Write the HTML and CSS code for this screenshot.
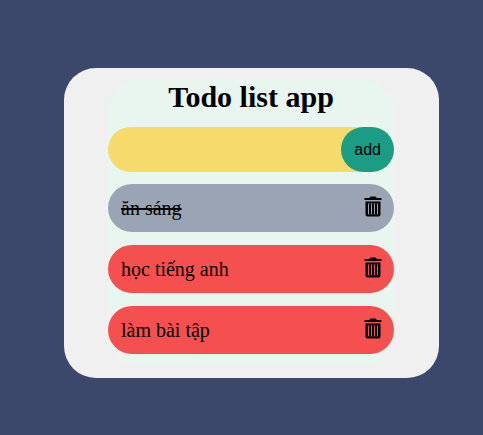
FILE: index.html
```html
<!DOCTYPE html>
<html lang="vi">
<head>
<meta charset="utf-8">
<title>Todo list app</title>
<link rel="stylesheet" href="styles.css">
</head>
<body>
<svg class="defs" aria-hidden="true">
  <symbol id="trash" viewBox="0 0 18 21">
    <path d="M5.500 2V1.500Q6 .5 7 .5h4q1 0 1.500 1V2H17.500V4H.5V2z"/>
    <path fill-rule="evenodd" d="M1.500 5.500h15V18.500q0 2-2 2H3.500q-2 0-2-2zM4 7.500V18.300h10V7.500z"/>
    <path d="M5 7.500h2v10.800H5zM8 7.500h2v10.800H8zM11 7.500h2v10.800h-2z"/>
  </symbol>
</svg>
<main class="card">
  <div class="app">
    <h1 class="title">Todo list app</h1>
    <form class="entry">
      <input class="entry-text" type="text" aria-label="New todo">
      <button class="entry-add" type="button">add</button>
    </form>
    <ul class="todos">
      <li class="todo done"><span>ăn sáng</span><button class="delete" type="button" aria-label="Delete"><svg class="icon"><use href="#trash"/></svg></button></li>
      <li class="todo"><span>học tiếng anh</span><button class="delete" type="button" aria-label="Delete"><svg class="icon"><use href="#trash"/></svg></button></li>
      <li class="todo"><span>làm bài tập</span><button class="delete" type="button" aria-label="Delete"><svg class="icon"><use href="#trash"/></svg></button></li>
    </ul>
  </div>
</main>
</body>
</html>
```
FILE: styles.css
```css
* {
  box-sizing: border-box;
}

body {
  margin: 0;
  padding: 68px 44px 0 64px;
  background: #3c486b;
  font-family: "Liberation Serif", "Times New Roman", serif;
  font-size: 20px;
  color: #000;
}

.defs {
  display: none;
}

.card {
  padding: 12px 45px 12px 44px;
  border-radius: 32px;
  background: #f0f0f0;
}

.app {
  padding-bottom: 12px;
  border-radius: 32px;
  background: #e8f6ef;
}

.title {
  margin: 0 0 13px;
  font-size: 30px;
  line-height: 34px;
  text-align: center;
}

.entry {
  display: flex;
  height: 45px;
  margin-bottom: 12px;
  border-radius: 24px;
  background: #f5db6b;
}

.entry-text {
  flex: 1;
  min-width: 0;
  padding: 0 13px;
  border: 0;
  outline: 0;
  background: transparent;
  font: inherit;
}

.entry-add {
  padding: 0 13px;
  border: 0;
  border-radius: 24px;
  background: #1b9c85;
  color: #000;
  font-family: "Liberation Sans", Arial, sans-serif;
  font-size: 16px;
}

.todos {
  display: grid;
  gap: 13px;
  margin: 0;
  padding: 0;
  list-style: none;
}

.todo {
  display: flex;
  align-items: center;
  justify-content: space-between;
  height: 48px;
  padding: 0 12px 0 13px;
  border-radius: 24px;
  background: #f45050;
}

.done {
  background: #9ba4b5;
}

.done span {
  text-decoration: line-through 2px;
}

.delete {
  padding: 0 0 3px;
  border: 0;
  background: transparent;
  color: #000;
}

.icon {
  display: block;
  width: 18px;
  height: 21px;
  fill: currentColor;
}
```
